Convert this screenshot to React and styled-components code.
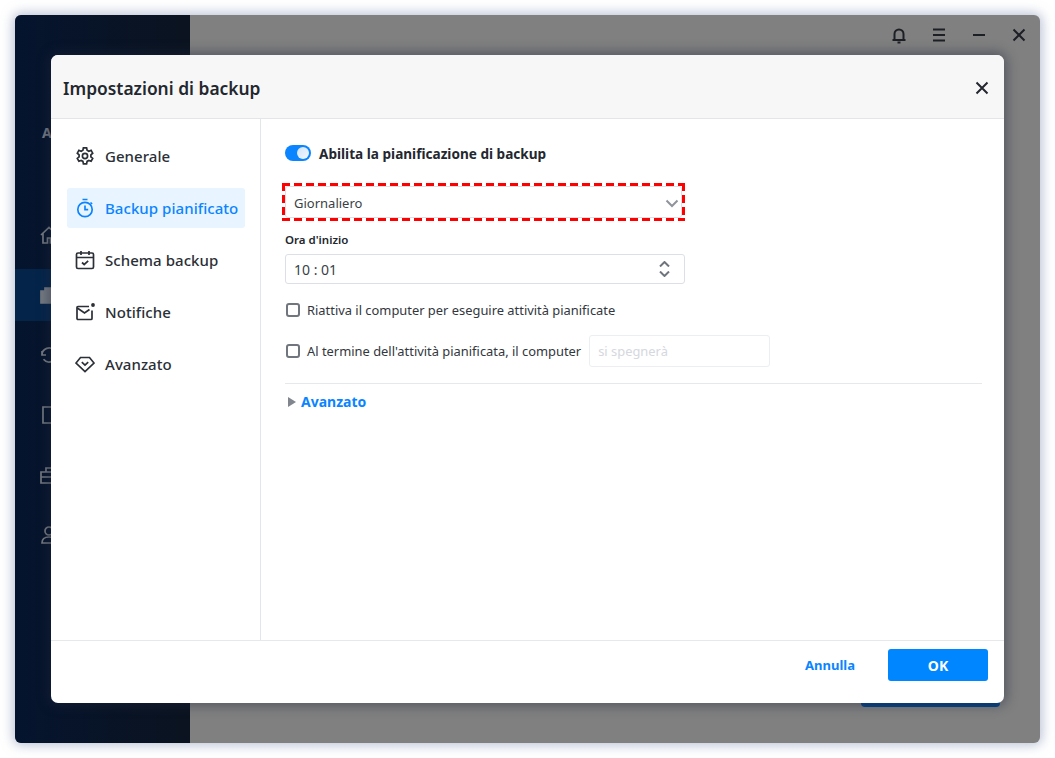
import React from "react";
import styled, { createGlobalStyle } from "styled-components";

const GlobalStyle = createGlobalStyle`
  html, body {
    margin: 0;
    padding: 0;
    background: #fff;
  }
  body {
    font-family: "Noto Sans", "Open Sans", sans-serif;
    color: #23272e;
  }
`;

const Page = styled.div`
  width: 1055px;
  height: 758px;
  padding: 15px;
  box-sizing: border-box;
  overflow: hidden;
`;

const AppWindow = styled.div`
  position: relative;
  width: 1025px;
  height: 728px;
  display: flex;
  border-radius: 6px;
  background: #808080;
  box-shadow: 0 0 12px 2px rgba(125, 140, 175, 0.55);
`;

const Side = styled.div`
  width: 175px;
  background: linear-gradient(to right, #05142e, #0b1320);
  border-radius: 6px 0 0 6px;
  display: flex;
  flex-direction: column;
  color: #757a82;
`;

const Brand = styled.div`
  margin: 109px 0 0 27px;
  height: 18px;
  font-size: 14px;
  font-weight: 700;
  line-height: 18px;
`;

const SideList = styled.div`
  margin-top: 67px;
  display: flex;
  flex-direction: column;
  gap: 8px;
`;

const SideItem = styled.div`
  height: 52px;
  padding-left: 24px;
  display: flex;
  align-items: center;
  background: ${(p) => (p.$active ? "#04244a" : "transparent")};
`;

const Content = styled.div`
  flex: 1;
  display: flex;
  flex-direction: column;
  padding: 7px 12px 0 0;
`;

const TopBar = styled.div`
  display: flex;
  justify-content: flex-end;
  align-items: center;
  gap: 22px;
  height: 26px;
  color: #1c1f24;
`;

const TopIcon = styled.svg`
  width: 18px;
  height: 18px;
  fill: none;
  stroke: currentColor;
  stroke-width: 2;
  display: block;
`;

const BehindButton = styled.div`
  position: absolute;
  left: 846px;
  top: 660px;
  width: 139px;
  height: 32px;
  border-radius: 4px;
  background: #064384;
`;

const Modal = styled.div`
  position: absolute;
  left: 36px;
  top: 40px;
  width: 953px;
  height: 648px;
  background: #fff;
  border-radius: 7px;
  display: flex;
  flex-direction: column;
  overflow: hidden;
  box-shadow: 0 0 12px 3px rgba(30, 40, 60, 0.45);
`;

const ModalHead = styled.div`
  height: 64px;
  box-sizing: border-box;
  flex: none;
  background: #f7f7f8;
  border-bottom: 1px solid #e4e5e8;
  display: flex;
  align-items: center;
  justify-content: space-between;
  padding: 3px 13px 0 12px;
`;

const Title = styled.div`
  font-size: 17.4px;
  font-weight: 600;
  color: #23272e;
`;

const ModalBody = styled.div`
  flex: 1;
  display: flex;
  min-height: 0;
`;

const Nav = styled.div`
  width: 210px;
  box-sizing: border-box;
  flex: none;
  border-right: 1px solid #e4e5e8;
  padding: 17px 15px 0 16px;
  display: flex;
  flex-direction: column;
  gap: 12px;
`;

const NavItem = styled.div`
  height: 40px;
  display: flex;
  align-items: center;
  gap: 10px;
  padding-left: 8px;
  border-radius: 3px;
  font-size: 15px;
  font-weight: 500;
  white-space: nowrap;
  letter-spacing: 0.05px;
  color: ${(p) => (p.$active ? "#0a84ff" : "#2b2f36")};
  background: ${(p) => (p.$active ? "#e8f4ff" : "transparent")};
`;

const NavIcon = styled.svg`
  width: 20px;
  height: 20px;
  flex: none;
  fill: none;
  stroke: currentColor;
  stroke-width: 1.7;
`;

const Pane = styled.div`
  flex: 1;
  padding: 24px 22px 0 24px;
  display: flex;
  flex-direction: column;
  align-items: flex-start;
`;

const ToggleRow = styled.div`
  display: flex;
  align-items: center;
  gap: 8px;
  height: 20px;
  font-size: 13.6px;
  font-weight: 700;
  color: #23272e;
`;

const Toggle = styled.div`
  width: 26px;
  height: 16px;
  border-radius: 8px;
  background: #0a84ff;
  display: flex;
  justify-content: flex-end;
  align-items: center;
  padding-right: 2px;
  box-sizing: border-box;
`;

const Knob = styled.div`
  width: 12px;
  height: 12px;
  border-radius: 50%;
  background: linear-gradient(135deg, #cfe3fb, #f4f8fe);
`;

const Highlight = styled.div`
  margin: 20px 0 0 -3px;
  width: 403px;
  height: 38px;
  box-sizing: border-box;
  padding: 3px;
  display: flex;
  background:
    repeating-linear-gradient(to right, #f00 0 8px, transparent 8px 12px) top / 100% 3px no-repeat,
    repeating-linear-gradient(to right, #f00 0 8px, transparent 8px 12px) bottom / 100% 3px no-repeat,
    repeating-linear-gradient(to bottom, #f00 0 8px, transparent 8px 12px) left / 3px 100% no-repeat,
    repeating-linear-gradient(to bottom, #f00 0 8px, transparent 8px 12px) right / 3px 100% no-repeat;
`;

const SelectField = styled.div`
  flex: 1;
  box-sizing: border-box;
  border: 1px solid #dcdfe5;
  border-radius: 3px;
  background: #fff;
  display: flex;
  align-items: center;
  justify-content: space-between;
  padding: 2px 2px 0 8px;
  font-size: 13px;
  color: #3a3f47;
`;

const TimeField = styled.div`
  width: 400px;
  height: 30px;
  margin-top: 5px;
  box-sizing: border-box;
  border: 1px solid #dcdfe5;
  border-radius: 3px;
  background: #fff;
  display: flex;
  align-items: center;
  justify-content: space-between;
  padding: 0 5px 0 8px;
  font-size: 14px;
  color: #3a3f47;
`;

const FieldLabel = styled.div`
  margin-top: 10px;
  height: 18px;
  line-height: 18px;
  font-size: 11.5px;
  font-weight: 600;
  color: #23272e;
`;

const Chevron = styled.svg`
  width: 14px;
  height: 14px;
  fill: none;
  stroke: #8f949c;
  stroke-width: 2;
`;

const Spin = styled.div`
  display: flex;
  flex-direction: column;
  gap: 4px;
  margin-right: 9px;
`;

const SpinIcon = styled.svg`
  width: 11px;
  height: 6px;
  display: block;
  fill: none;
  stroke: #6f747d;
  stroke-width: 2;
`;

const CheckRow = styled.div`
  display: flex;
  align-items: center;
  gap: 7px;
  font-size: 12.9px;
  color: #33373e;
  margin-top: ${(p) => p.$top};
`;

const Box = styled.div`
  width: 14px;
  height: 14px;
  flex: none;
  box-sizing: border-box;
  margin-left: 1px;
  border: 2px solid #70757e;
  border-radius: 3px;
`;

const Disabled = styled.div`
  width: 181px;
  height: 32px;
  box-sizing: border-box;
  margin-left: 1px;
  border: 1px solid #eceef1;
  border-radius: 3px;
  padding-left: 8px;
  display: flex;
  align-items: center;
  font-size: 12.9px;
  color: #d5d8de;
`;

const Divider = styled.div`
  align-self: stretch;
  height: 1px;
  background: #e7e8ea;
  margin-top: 16px;
`;

const AdvancedRow = styled.div`
  display: flex;
  align-items: center;
  gap: 5px;
  margin-top: 8px;
  margin-left: 3px;
  font-size: 14px;
  font-weight: 700;
  color: #0a84ff;
`;

const Caret = styled.div`
  width: 0;
  height: 0;
  border-left: 8px solid #80858e;
  border-top: 5px solid transparent;
  border-bottom: 5px solid transparent;
`;

const ModalFoot = styled.div`
  height: 63px;
  flex: none;
  box-sizing: border-box;
  border-top: 1px solid #e7e8ea;
  display: flex;
  align-items: center;
  justify-content: flex-end;
  padding: 0 16px 14px 0;
`;

const CancelButton = styled.div`
  font-size: 13px;
  font-weight: 700;
  color: #0a84ff;
  margin-right: 33px;
`;

const OkButton = styled.div`
  width: 100px;
  height: 32px;
  border-radius: 3px;
  background: #0086ff;
  color: #fff;
  font-size: 14px;
  font-weight: 700;
  display: flex;
  align-items: center;
  justify-content: center;
`;

const CloseGlyph = () => (
  <TopIcon viewBox="0 0 18 18">
    <path d="M3.5 3.5 14.5 14.5M14.5 3.5 3.5 14.5" />
  </TopIcon>
);

const items = [
  {
    label: "Generale",
    icon: (
      <>
        <circle cx="10" cy="10" r="2.6" />
        <path d="M8.4 1.8h3.2l.5 2.4 1.7 1 2.3-.8 1.6 2.8-1.8 1.6v2l1.8 1.6-1.6 2.8-2.3-.8-1.7 1-.5 2.4H8.4l-.5-2.4-1.7-1-2.3.8-1.6-2.8 1.8-1.6v-2L2.3 7.2l1.6-2.8 2.3.8 1.7-1z" />
      </>
    ),
  },
  {
    label: "Backup pianificato",
    active: true,
    icon: (
      <>
        <circle cx="10" cy="11.5" r="7.2" />
        <path d="M7.5 1.5h5M10 7.5v4.2h3.2M15.5 4.5l1.6 1.5" />
      </>
    ),
  },
  {
    label: "Schema backup",
    icon: (
      <>
        <rect x="1.5" y="3" width="17" height="15.5" rx="1.5" />
        <path d="M1.5 7.5h17M6 1v4M14 1v4M7 12.5l2.2 2 4-3.6" />
      </>
    ),
  },
  {
    label: "Notifiche",
    icon: (
      <>
        <path d="M17 8.5v8a1 1 0 0 1-1 1H3a1 1 0 0 1-1-1V5.5a1 1 0 0 1 1-1h11" />
        <path d="M2.3 6 9.5 11l5-3.5" />
        <circle cx="18" cy="3" r="1.9" fill="currentColor" stroke="none" />
      </>
    ),
  },
  {
    label: "Avanzato",
    icon: (
      <>
        <path d="M5.5 3.5h9L19 9l-9 8.5L1 9z" />
        <path d="M6.8 8.2 10 11.2l3.2-3" />
      </>
    ),
  },
];

const sideIcons = [
  <path key="home" d="M2 10 10 2.5 18 10M4 8.5V18h4.5v-5h3v5H16V8.5" />,
  <path key="backup" d="M2 6h16v12H2zM6 6V3h8v3" fill="currentColor" />,
  <path key="sync" d="M3 10a7 7 0 0 1 12.5-4.3M17 10a7 7 0 0 1-12.5 4.3M3 6v4h4M17 14v-4h-4" />,
  <path key="tools" d="M4 2h12v16H4z" />,
  <path key="case" d="M2 7h16v11H2zM7 7V3h6v4M2 12h16" />,
  <path key="user" d="M10 10a4 4 0 1 0 0-8 4 4 0 0 0 0 8zM3 18c0-4 3-6 7-6s7 2 7 6z" />,
];

export default function App() {
  return (
    <Page>
      <GlobalStyle />
      <AppWindow>
        <Side>
          <Brand>A</Brand>
          <SideList>
            {sideIcons.map((icon, i) => (
              <SideItem key={i} $active={i === 1}>
                <NavIcon viewBox="0 0 20 20">{icon}</NavIcon>
              </SideItem>
            ))}
          </SideList>
        </Side>
        <Content>
          <TopBar>
            <TopIcon viewBox="0 0 18 18">
              <path d="M2.5 14h13M4.5 14V8a4.5 4.5 0 0 1 9 0v6M7.5 16.5h3" />
            </TopIcon>
            <TopIcon viewBox="0 0 18 18">
              <path d="M3 3.5h12M3 9h12M3 14.5h12" />
            </TopIcon>
            <TopIcon viewBox="0 0 18 18">
              <path d="M3 9h12" />
            </TopIcon>
            <CloseGlyph />
          </TopBar>
        </Content>
        <BehindButton />
        <Modal>
          <ModalHead>
            <Title>Impostazioni di backup</Title>
            <CloseGlyph />
          </ModalHead>
          <ModalBody>
            <Nav>
              {items.map((item) => (
                <NavItem key={item.label} $active={item.active}>
                  <NavIcon viewBox="0 0 20 20">{item.icon}</NavIcon>
                  {item.label}
                </NavItem>
              ))}
            </Nav>
            <Pane>
              <ToggleRow>
                <Toggle>
                  <Knob />
                </Toggle>
                Abilita la pianificazione di backup
              </ToggleRow>
              <Highlight>
                <SelectField>
                  Giornaliero
                  <Chevron viewBox="0 0 14 14">
                    <path d="M1.5 4.5 7 10l5.5-5.5" />
                  </Chevron>
                </SelectField>
              </Highlight>
              <FieldLabel>Ora d'inizio</FieldLabel>
              <TimeField>
                10 : 01
                <Spin>
                  <SpinIcon viewBox="0 0 11 6">
                    <path d="M1 5.5 5.5 1 10 5.5" />
                  </SpinIcon>
                  <SpinIcon viewBox="0 0 11 6">
                    <path d="M1 .5 5.5 5 10 .5" />
                  </SpinIcon>
                </Spin>
              </TimeField>
              <CheckRow $top="17px">
                <Box />
                Riattiva il computer per eseguire attività pianificate
              </CheckRow>
              <CheckRow $top="16px">
                <Box />
                Al termine dell'attività pianificata, il computer
                <Disabled>si spegnerà</Disabled>
              </CheckRow>
              <Divider />
              <AdvancedRow>
                <Caret />
                Avanzato
              </AdvancedRow>
            </Pane>
          </ModalBody>
          <ModalFoot>
            <CancelButton>Annulla</CancelButton>
            <OkButton>OK</OkButton>
          </ModalFoot>
        </Modal>
      </AppWindow>
    </Page>
  );
}
